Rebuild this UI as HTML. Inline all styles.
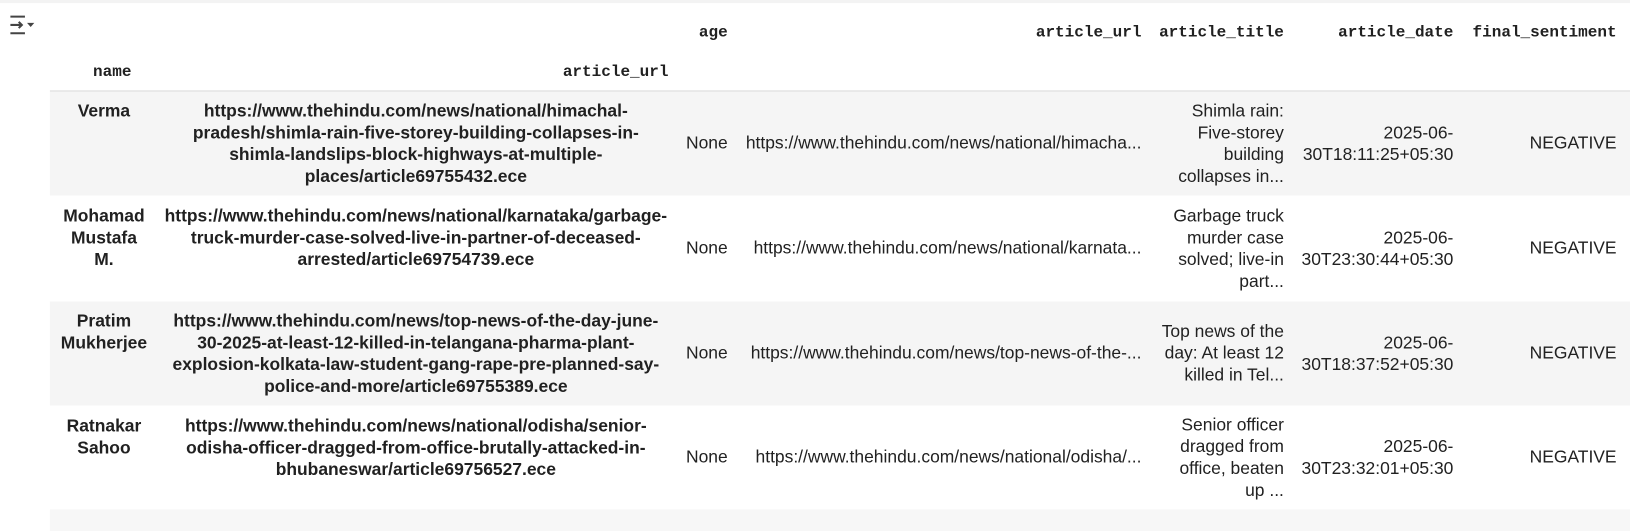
<!DOCTYPE html>
<html><head><meta charset="utf-8"><style>
*{margin:0;padding:0;box-sizing:border-box}
body{width:1630px;height:512px;background:#fff;position:relative;overflow:hidden;font-family:"Liberation Sans",Arial,sans-serif;color:#212121}
#w{position:absolute;left:0;top:0;width:1568px;height:493px;transform:scale(1.0396);transform-origin:0 0}
.top{position:absolute;left:0;top:0;width:1568px;height:3px;background:#f3f3f3}
.row{position:absolute;left:48px;width:1520px}
.g{background:#f5f5f5}
.c{position:absolute;white-space:nowrap;font-size:16.8px;line-height:21px}
.h{position:absolute;white-space:nowrap;font-family:"Liberation Mono",monospace;font-weight:bold;font-size:15.4px;line-height:20px;color:#212121}
.b{font-weight:bold}
.r{text-align:right}.m{text-align:center}
</style></head><body><div id="w">
<div class="top"></div>
<svg style="position:absolute;left:8px;top:14px" width="26" height="20" viewBox="0 0 26 20">
<path d="M2 2h14M2 18h14" stroke="#444" stroke-width="2" fill="none"/>
<path d="M2 10h11M10 7l3 3-3 3" stroke="#444" stroke-width="2" fill="none"/>
<path d="M18 8h7l-3.5 4z" fill="#444"/>
</svg>
<div class="h r" style="left:600px;width:100px;top:21px">age</div>
<div class="h r" style="left:900px;width:198px;top:21px">article_url</div>
<div class="h r" style="left:1100px;width:135px;top:21px">article_title</div>
<div class="h r" style="left:1240px;width:158px;top:21px">article_date</div>
<div class="h r" style="left:1400px;width:155px;top:21px">final_sentiment</div>
<div class="h m" style="left:40px;width:136px;top:59px">name</div>
<div class="h r" style="left:400px;width:243px;top:59px">article_url</div>
<div style="position:absolute;left:48px;top:87px;width:1520px;height:1px;background:#dadada"></div>

<div class="row g" style="top:88px;height:100px"></div>
<div class="row" style="top:188px;height:102px"></div>
<div class="row g" style="top:290px;height:100px"></div>
<div class="row" style="top:390px;height:100px"></div>
<div class="row g" style="top:490px;height:21px;background:#f7f7f7"></div>

<div class="c b m" style="left:40px;width:120px;top:96px">Verma</div>
<div class="c b m" style="left:150px;width:500px;top:96px">https://www.thehindu.com/news/national/himachal-<br>pradesh/shimla-rain-five-storey-building-collapses-in-<br>shimla-landslips-block-highways-at-multiple-<br>places/article69755432.ece</div>
<div class="c r" style="left:620px;width:80px;top:127px">None</div>
<div class="c r" style="left:680px;width:418px;top:127px">https://www.thehindu.com/news/national/himacha...</div>
<div class="c r" style="left:1100px;width:135px;top:96px">Shimla rain:<br>Five-storey<br>building<br>collapses in...</div>
<div class="c r" style="left:1240px;width:158px;top:117px">2025-06-<br>30T18:11:25+05:30</div>
<div class="c r" style="left:1400px;width:155px;top:127px">NEGATIVE</div>

<div class="c b m" style="left:40px;width:120px;top:197px">Mohamad<br>Mustafa<br>M.</div>
<div class="c b m" style="left:150px;width:500px;top:197px">https://www.thehindu.com/news/national/karnataka/garbage-<br>truck-murder-case-solved-live-in-partner-of-deceased-<br>arrested/article69754739.ece</div>
<div class="c r" style="left:620px;width:80px;top:228px">None</div>
<div class="c r" style="left:680px;width:418px;top:228px">https://www.thehindu.com/news/national/karnata...</div>
<div class="c r" style="left:1100px;width:135px;top:197px">Garbage truck<br>murder case<br>solved; live-in<br>part...</div>
<div class="c r" style="left:1240px;width:158px;top:218px">2025-06-<br>30T23:30:44+05:30</div>
<div class="c r" style="left:1400px;width:155px;top:228px">NEGATIVE</div>

<div class="c b m" style="left:40px;width:120px;top:298px">Pratim<br>Mukherjee</div>
<div class="c b m" style="left:150px;width:500px;top:298px">https://www.thehindu.com/news/top-news-of-the-day-june-<br>30-2025-at-least-12-killed-in-telangana-pharma-plant-<br>explosion-kolkata-law-student-gang-rape-pre-planned-say-<br>police-and-more/article69755389.ece</div>
<div class="c r" style="left:620px;width:80px;top:329px">None</div>
<div class="c r" style="left:680px;width:418px;top:329px">https://www.thehindu.com/news/top-news-of-the-...</div>
<div class="c r" style="left:1100px;width:135px;top:308px">Top news of the<br>day: At least 12<br>killed in Tel...</div>
<div class="c r" style="left:1240px;width:158px;top:319px">2025-06-<br>30T18:37:52+05:30</div>
<div class="c r" style="left:1400px;width:155px;top:329px">NEGATIVE</div>

<div class="c b m" style="left:40px;width:120px;top:399px">Ratnakar<br>Sahoo</div>
<div class="c b m" style="left:150px;width:500px;top:399px">https://www.thehindu.com/news/national/odisha/senior-<br>odisha-officer-dragged-from-office-brutally-attacked-in-<br>bhubaneswar/article69756527.ece</div>
<div class="c r" style="left:620px;width:80px;top:429px">None</div>
<div class="c r" style="left:680px;width:418px;top:429px">https://www.thehindu.com/news/national/odisha/...</div>
<div class="c r" style="left:1100px;width:135px;top:398px">Senior officer<br>dragged from<br>office, beaten<br>up ...</div>
<div class="c r" style="left:1240px;width:158px;top:419px">2025-06-<br>30T23:32:01+05:30</div>
<div class="c r" style="left:1400px;width:155px;top:429px">NEGATIVE</div>
</div></body></html>
